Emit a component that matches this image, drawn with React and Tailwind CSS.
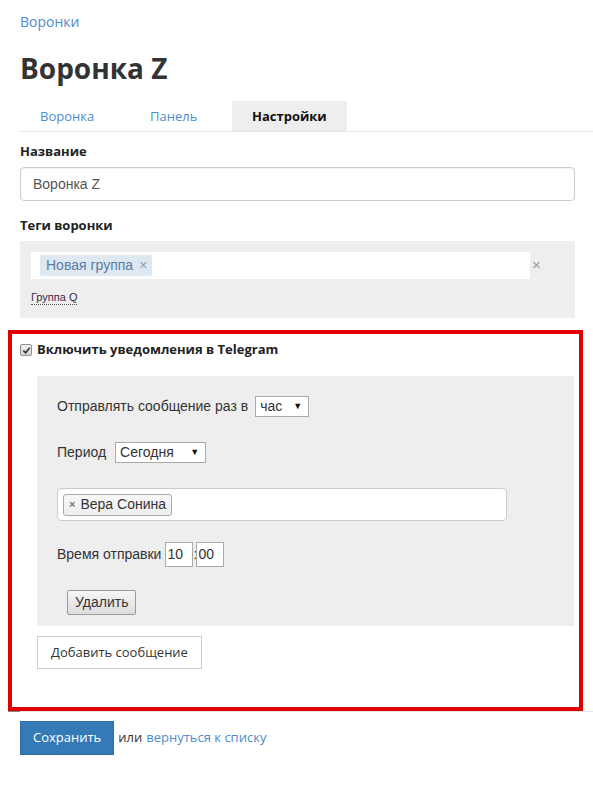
import * as React from 'react';

const head = "font-['Open_Sans',sans-serif]";

function FakeSelect({ value, width }) {
  return (
    <div className={`flex h-[21px] ${width} items-center justify-between border border-[#a9a9a9] bg-white pl-[4px] pr-[6px] text-[14px] text-[#333]`}>
      <span>{value}</span>
      <span className="text-[9px] leading-none text-[#111]">▼</span>
    </div>
  );
}

export default function App() {
  return (
    <div className="min-h-[793px] bg-white pl-5 pr-[18px] pt-3 font-['Liberation_Sans',Arial,sans-serif] text-[14px] text-[#333]">
      {/* breadcrumb + title */}
      <div className={`${head} text-[14px] leading-5 text-[#4f8ccb]`}>Воронки</div>
      <h1 className={`${head} mt-[18px] text-[28px] font-bold leading-9 text-[#333]`}>Воронка Z</h1>

      {/* tabs */}
      <div className={`${head} -mr-[18px] mt-[15px] flex border-b border-[#e8e8e8] text-[13px] leading-[30px]`}>
        <div className="w-[130px] pl-5 text-[#4f8ccb]">Воронка</div>
        <div className="w-[82px] text-[#4f8ccb]">Панель</div>
        <div className="bg-[#eee] px-5 font-bold text-[#111]">Настройки</div>
      </div>

      {/* name */}
      <div className={`${head} mt-[9px] text-[13px] font-bold leading-5 text-[#222]`}>Название</div>
      <div className="mt-1.5 flex h-[34px] items-center rounded-[4px] border border-[#ccc] pl-3 text-[#555] shadow-[inset_0_1px_1px_rgba(0,0,0,0.06)]">
        Воронка Z
      </div>

      {/* tags */}
      <div className={`${head} mt-[14px] text-[13px] font-bold leading-5 text-[#222]`}>Теги воронки</div>
      <div className="mt-1.5 h-[77px] bg-[#eee] pl-[11px] pt-[11px]">
        <div className="flex items-center">
          <div className="flex h-[27px] w-[499px] items-center bg-white pl-[9px]">
            <span className="flex h-[21px] items-center gap-[6px] rounded-[2px] bg-[#dde8f0] pl-[6px] pr-[5px] text-[14px] text-[#5a7ca5]">
              Новая группа <span className="text-[14px] text-[#8a9fb5]">×</span>
            </span>
          </div>
          <span className="ml-[2px] text-[15px] text-[#999]">×</span>
        </div>
        <div className="mt-[10px] leading-none">
          <span className="border-b border-dotted border-[#555] pb-[1px] text-[11px] text-[#3a2a4a]">Группа Q</span>
        </div>
      </div>

      {/* telegram section */}
      <section className="-ml-3 -mr-2 mt-3 border-4 border-[#e00000] pb-[38px] pl-2 pr-[5px] pt-[6px] shadow-[0_1px_0_#888]">
        <div className="flex h-5 items-center gap-[5px]">
          <span className="flex h-[12px] w-[12px] items-center justify-center rounded-[2px] border border-[#8f8f8f] bg-gradient-to-b from-[#f0f0f0] to-[#d4d4d4]">
            <svg width="9" height="9" viewBox="0 0 10 10">
              <path d="M1.5 5.2 L4 7.6 L8.6 2" fill="none" stroke="#333" strokeWidth="1.8" />
            </svg>
          </span>
          <span className={`${head} text-[13px] font-bold text-[#222]`}>Включить уведомления в Telegram</span>
        </div>

        <div className="ml-[17px] mt-4 bg-[#eee] pb-[11px] pl-5 pt-5">
          <div className="flex items-center gap-[7px]">
            <span>Отправлять сообщение раз в</span>
            <FakeSelect value="час" width="w-[54px]" />
          </div>
          <div className="mt-[25px] flex items-center gap-[9px]">
            <span>Период</span>
            <FakeSelect value="Сегодня" width="w-[91px]" />
          </div>
          <div className="mt-[25px] flex h-[33px] w-[450px] items-center rounded-[4px] border border-[#ccc] bg-white pl-[5px]">
            <span className="flex h-[22px] items-center gap-[5px] rounded-[3px] border border-[#aaa] bg-gradient-to-b from-[#f8f8f8] to-[#eee] pl-[5px] pr-[5px] text-[14px] text-[#333]">
              <span className="text-[11px] font-bold text-[#777]">×</span>
              Вера Сонина
            </span>
          </div>
          <div className="mt-[21px] flex items-center">
            <span className="mr-[4px]">Время отправки</span>
            <span className="flex h-[25px] w-[28px] items-center border border-[#aaa] bg-white pl-[1px]">10</span>
            <span className="w-[3px] text-[#333]">:</span>
            <span className="flex h-[25px] w-[28px] items-center border border-[#aaa] bg-white pl-[1px]">00</span>
          </div>
          <button className="ml-[10px] mt-[23px] flex h-[25px] items-center rounded-[2px] border border-[#9a9a9a] bg-gradient-to-b from-[#f6f6f6] to-[#dcdcdc] px-[7px] text-[14px] text-[#333]">
            Удалить
          </button>
        </div>

        <button className={`${head} ml-[17px] mt-[10px] flex h-[33px] items-center border border-[#ccc] bg-white px-[13px] text-[13px] text-[#333]`}>
          Добавить сообщение
        </button>
      </section>
      <div className="-mr-[18px] border-t border-[#e5e5e5]" />

      {/* save */}
      <div className={`${head} mt-[9px] flex items-center text-[13px]`}>
        <button className="flex h-[34px] items-center border border-[#2e6da4] bg-[#337ab7] px-[12px] text-white">Сохранить</button>
        <span className="ml-1 text-[#333]">или</span>
        <span className="ml-1 text-[#4f8ccb]">вернуться к списку</span>
      </div>
    </div>
  );
}
